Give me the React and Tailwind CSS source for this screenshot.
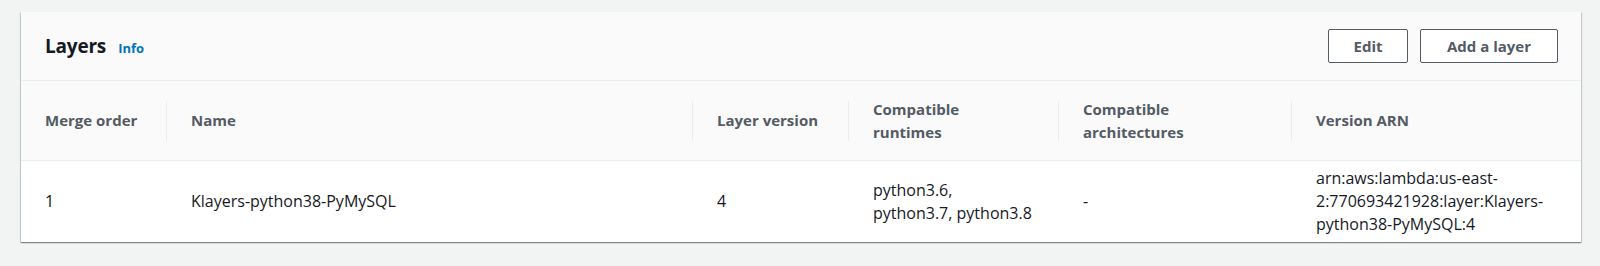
import React from 'react';

const columns = [
  { key: 'order', label: 'Merge order', width: 'w-[145px]' },
  { key: 'name', label: 'Name', width: 'w-[526px]' },
  { key: 'version', label: 'Layer version', width: 'w-[156px]' },
  { key: 'runtimes', label: ['Compatible', 'runtimes'], width: 'w-[210px]' },
  { key: 'arch', label: ['Compatible', 'architectures'], width: 'w-[233px]' },
  { key: 'arn', label: 'Version ARN', width: 'flex-1' },
];

const row = {
  order: '1',
  name: 'Klayers-python38-PyMySQL',
  version: '4',
  runtimes: ['python3.6,', 'python3.7, python3.8'],
  arch: '-',
  arn: ['arn:aws:lambda:us-east-', '2:770693421928:layer:Klayers-', 'python38-PyMySQL:4'],
};

const Lines = ({ value }) =>
  Array.isArray(value) ? value.map((l) => <span key={l} className="block">{l}</span>) : value;

export default function App() {
  return (
    <div
      className="h-[266px] bg-[#f2f3f3] pt-3 pl-[21px] pr-[19px]"
      style={{ fontFamily: '"Open Sans", "Noto Sans", sans-serif' }}
    >
      <div className="bg-white shadow-[0_1px_1px_0_rgba(0,28,36,0.3),1px_1px_1px_0_rgba(0,28,36,0.15),-1px_1px_1px_0_rgba(0,28,36,0.15)]">
        {/* Header */}
        <div className="h-[69px] bg-[#fafafa] border-b border-[#eaeded] flex items-center justify-between pl-6 pr-[23px]">
          <div className="flex items-baseline gap-3">
            <h2 className="text-[19px] font-bold text-[#16191f] tracking-[-0.2px]">Layers</h2>
            <a className="text-[13px] font-bold text-[#0073bb]">Info</a>
          </div>
          <div className="flex gap-3">
            <button className="h-[34px] w-[80px] border border-[#545b64] rounded-[2px] bg-white text-[15px] font-bold text-[#545b64]">
              Edit
            </button>
            <button className="h-[34px] w-[138px] border border-[#545b64] rounded-[2px] bg-white text-[15px] font-bold text-[#545b64]">
              Add a layer
            </button>
          </div>
        </div>

        {/* Table header */}
        <div className="flex h-[80px] bg-[#fafafa] border-b border-[#eaeded]">
          {columns.map((c, i) => (
            <div key={c.key} className={`${c.width} flex items-center`}>
              {i > 0 && <div className="w-px h-[40px] bg-[#eaeded]" />}
              <div className="pl-6 text-[15px] leading-[23px] font-bold text-[#545b64]">
                <Lines value={c.label} />
              </div>
            </div>
          ))}
        </div>

        {/* Body */}
        <div className="flex h-[81px]">
          {columns.map((c, i) => (
            <div key={c.key} className={`${c.width} flex items-center ${i > 0 ? 'pl-[25px]' : 'pl-6'}`}>
              <div className="text-[16px] leading-[23px] text-[#16191f]">
                <Lines value={row[c.key]} />
              </div>
            </div>
          ))}
        </div>
      </div>
    </div>
  );
}
